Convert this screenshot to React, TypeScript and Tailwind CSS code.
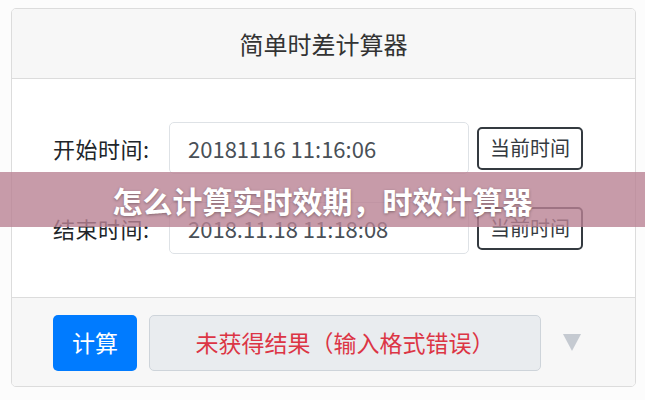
const font = { fontFamily: '"Noto Sans CJK SC", "Noto Sans", sans-serif' }

interface TimeRowProps {
  label: string
  value: string
}

const TimeRow = ({ label, value }: TimeRowProps) => {
  return (
    <div className="flex items-center">
      <div className="w-[116px] text-[22px] text-[#212529] leading-none tracking-[0.5px]">{label}</div>
      <div className="w-[300px] h-[52px] flex items-center pl-[18px] border border-[#dee2e6] rounded-[5px] bg-white text-[22px] text-[#495057]">
        {value}
      </div>
      <button
        type="button"
        className="ml-[8px] w-[106px] h-[43px] flex items-center justify-center border-2 border-[#343a40] rounded-[5px] bg-white text-[20px] text-[#343a40]"
      >
        当前时间
      </button>
    </div>
  )
}

const App = () => {
  return (
    <div className="relative w-[645px] h-[400px] bg-[#fcfcfc] pt-[8px] pl-[11px]" style={font}>
      <div className="w-[625px] border border-[#dcdcdc] rounded-[5px] overflow-hidden bg-white">
        <div className="h-[70px] flex items-center justify-center bg-[#f7f7f7] border-b border-[#dcdcdc] text-[24px] text-[#333]">
          简单时差计算器
        </div>
        <div className="flex flex-col gap-[28px] pt-[43px] pb-[43px] pl-[41px]">
          <TimeRow label="开始时间:" value="20181116 11:16:06" />
          <TimeRow label="结束时间:" value="2018.11.18 11:18:08" />
        </div>
        <div className="flex items-center h-[89px] bg-[#f7f7f7] border-t border-[#dcdcdc] pl-[41px] pt-[1px]">
          <button
            type="button"
            className="w-[84px] h-[56px] flex items-center justify-center rounded-[5px] bg-[#007bff] text-white text-[23px]"
          >
            计算
          </button>
          <div className="ml-[12px] w-[392px] h-[56px] flex items-center justify-center rounded-[5px] border border-[#ced4da] bg-[#e9ecef] text-[23px] text-[#dc3545]">
            未获得结果（输入格式错误）
          </div>
          <svg className="ml-[22px]" width="18" height="17" viewBox="0 0 18 17">
            <path d="M0 0 L18 0 L9 17 Z" fill="#c5cad1" />
          </svg>
        </div>
      </div>
      <div className="absolute left-0 right-0 top-[172px] h-[55px] flex items-center justify-center bg-[rgba(185,130,148,0.8)]">
        <span className="text-[30px] font-bold text-white leading-none [text-shadow:0_1px_3px_rgba(0,0,0,0.35)]">
          怎么计算实时效期，时效计算器
        </span>
      </div>
    </div>
  )
}

export default App
